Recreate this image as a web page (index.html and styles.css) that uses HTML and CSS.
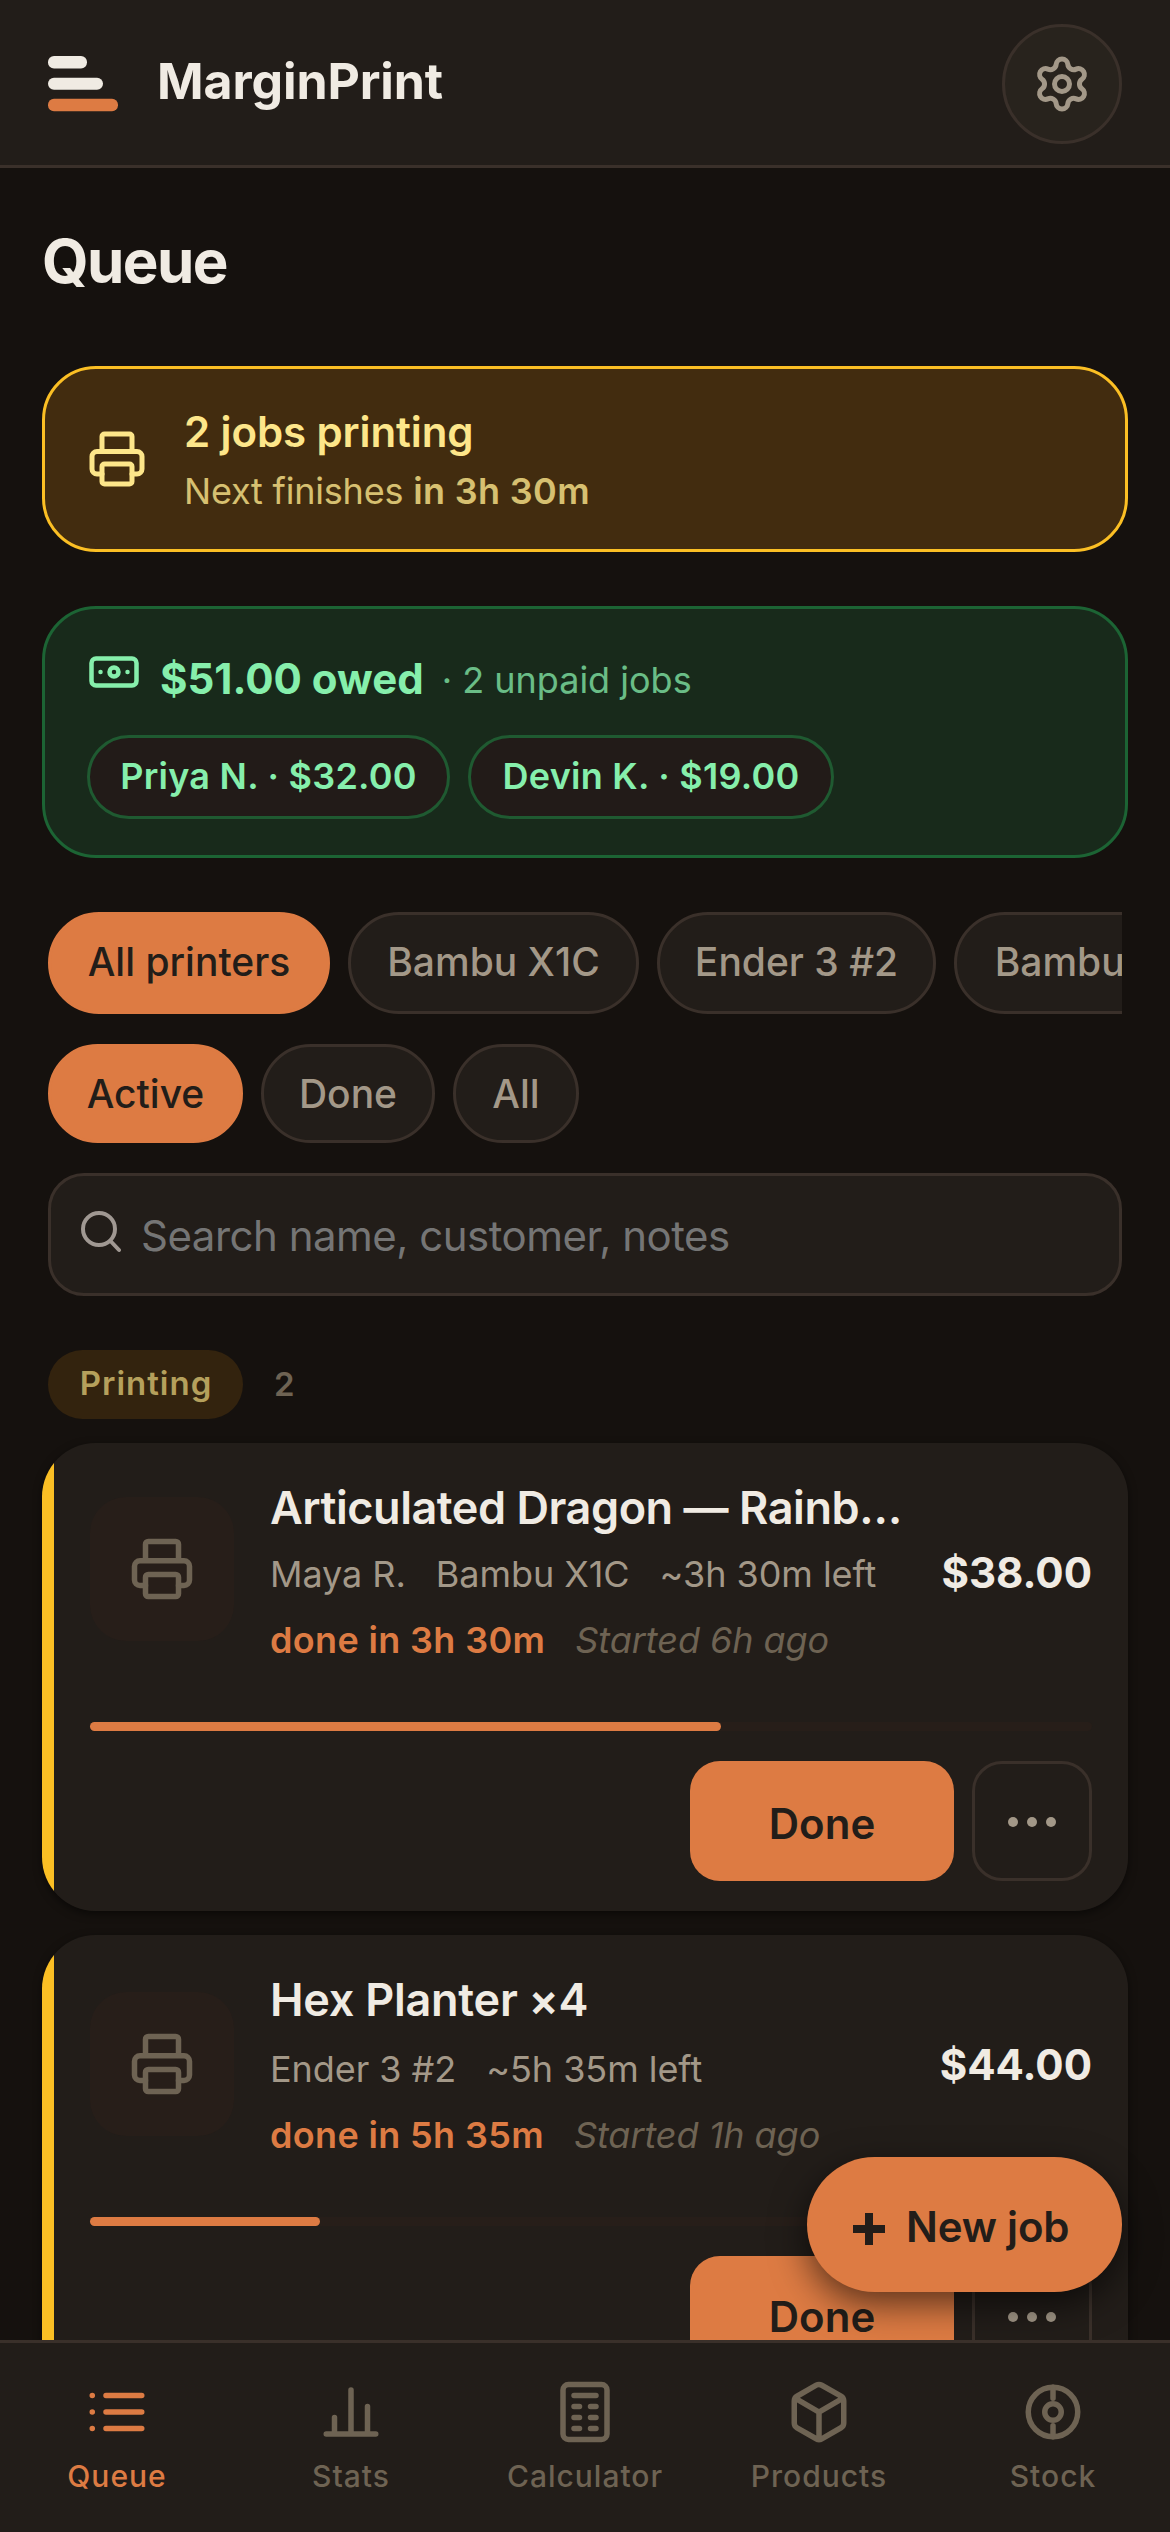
FILE: index.html
```html
<!DOCTYPE html>
<html lang="en">
<head>
<meta charset="utf-8">
<title>MarginPrint</title>
<link rel="stylesheet" href="styles.css">
</head>
<body>
<svg width="0" height="0" class="defs">
  <symbol id="printer" viewBox="0 0 24 24"><path d="M6 9V3a1 1 0 0 1 1-1h10a1 1 0 0 1 1 1v6M6 18H4a2 2 0 0 1-2-2v-5a2 2 0 0 1 2-2h16a2 2 0 0 1 2 2v5a2 2 0 0 1-2 2h-2"/><rect x="6" y="14" width="12" height="8" rx="1"/></symbol>
</svg>
<div class="app">
  <header class="topbar">
    <svg class="logo" viewBox="0 0 70 56"><rect width="39" height="12.500" rx="6" fill="#f0ebe3"/><rect y="21.800" width="55" height="12" rx="6" fill="#f0ebe3"/><rect y="42.800" width="70" height="12.500" rx="6" fill="#dd7b43"/></svg>
    <span class="brand">MarginPrint</span>
    <button class="settings" aria-label="Settings"><svg class="icon" viewBox="0 0 24 24"><path d="M9.671 4.136a2.340 2.340 0 0 1 4.659 0 2.340 2.340 0 0 0 3.319 1.915 2.340 2.340 0 0 1 2.330 4.033 2.340 2.340 0 0 0 0 3.831 2.340 2.340 0 0 1-2.330 4.033 2.340 2.340 0 0 0-3.319 1.915 2.340 2.340 0 0 1-4.659 0 2.340 2.340 0 0 0-3.320-1.915 2.340 2.340 0 0 1-2.330-4.033 2.340 2.340 0 0 0 0-3.831A2.340 2.340 0 0 1 6.350 6.051a2.340 2.340 0 0 0 3.319-1.915"/><circle cx="12" cy="12" r="3"/></svg></button>
  </header>
  <main class="content">
    <h1 class="title">Queue</h1>
    <section class="banner">
      <svg class="icon banner-icon"><use href="#printer"/></svg>
      <div class="banner-text"><div class="banner-title">2 jobs printing</div><div class="banner-sub">Next finishes <b>in 3h 30m</b></div></div>
    </section>
    <section class="owed">
      <div class="owed-head">
        <svg class="icon cash" viewBox="0 0 24 24"><rect x="2" y="6" width="20" height="12" rx="2"/><circle cx="12" cy="12" r="2"/><path d="M6 12h.01M18 12h.01"/></svg>
        <span class="owed-total">$51.00 owed</span><span class="owed-note">· 2 unpaid jobs</span>
      </div>
      <div class="owed-list"><span class="debtor">Priya N. · $32.00</span><span class="debtor debtor-second">Devin K. · $19.00</span></div>
    </section>
    <div class="chips printers"><span class="chip on c1">All printers</span><span class="chip c2">Bambu X1C</span><span class="chip c3">Ender 3 #2</span><span class="chip c4">Bambu A1</span></div>
    <div class="chips states"><span class="chip on c5">Active</span><span class="chip c6">Done</span><span class="chip c7">All</span></div>
    <div class="search"><svg class="glass" viewBox="0 0 40 42"><circle cx="18" cy="18" r="16"/><path d="M29.500 30 38 39"/></svg><span>Search name, customer, notes</span></div>
    <div class="group"><span class="status">Printing</span><span class="count">2</span></div>
    <article class="job">
      <div class="job-head">
        <div class="thumb"><svg class="icon"><use href="#printer"/></svg></div>
        <div class="info">
          <div class="name">Articulated Dragon — Rainb…</div>
          <div class="meta"><span>Maya R.</span><span>Bambu X1C</span><span>~3h 30m left</span></div>
          <div class="meta timing"><span class="eta">done in 3h 30m</span><span class="started">Started 6h ago</span></div>
        </div>
        <div class="price">$38.00</div>
      </div>
      <div class="track"><div class="fill" style="width:63%"></div></div>
      <div class="actions"><button class="done">Done</button><button class="more" aria-label="More"><i></i><i></i><i></i></button></div>
    </article>
    <article class="job second">
      <div class="job-head">
        <div class="thumb"><svg class="icon"><use href="#printer"/></svg></div>
        <div class="info">
          <div class="name">Hex Planter ×4</div>
          <div class="meta"><span>Ender 3 #2</span><span>~5h 35m left</span></div>
          <div class="meta timing"><span class="eta">done in 5h 35m</span><span class="started">Started 1h ago</span></div>
        </div>
        <div class="price">$44.00</div>
      </div>
      <div class="track"><div class="fill" style="width:23%"></div></div>
      <div class="actions"><button class="done">Done</button><button class="more" aria-label="More"><i></i><i></i><i></i></button></div>
    </article>
  </main>
  <button class="fab"><svg class="plus" viewBox="0 0 34 34"><path d="M17 1v32M1 17h32"/></svg><span>New job</span></button>
  <nav class="tabs">
    <a class="tab active"><svg class="icon" viewBox="0 0 24 24"><path d="M8 6h13M8 12h13M8 18h13M3 6h.01M3 12h.01M3 18h.01"/></svg><span>Queue</span></a>
    <a class="tab"><svg class="icon" viewBox="0 0 24 24"><path d="M3 20h18M6 20v-6M12 20V4M18 20V10"/></svg><span>Stats</span></a>
    <a class="tab"><svg class="icon" viewBox="0 0 24 24"><rect x="4" y="2" width="16" height="20" rx="2"/><path d="M8 6h8M8 10h2M14 10h2M8 14h2M14 14h2M8 18h2M14 18h2"/></svg><span>Calculator</span></a>
    <a class="tab"><svg class="icon" viewBox="0 0 24 24"><path d="M21 16V8a2 2 0 0 0-1-1.730l-7-4a2 2 0 0 0-2 0l-7 4A2 2 0 0 0 3 8v8a2 2 0 0 0 1 1.730l7 4a2 2 0 0 0 2 0l7-4A2 2 0 0 0 21 16zM3.270 6.960 12 12.010l8.730-5.050M12 22.080V12"/></svg><span>Products</span></a>
    <a class="tab"><svg class="icon" viewBox="0 0 24 24"><circle cx="12" cy="12" r="9"/><circle cx="12" cy="12" r="3"/><path d="M12 3v4M12 17v4"/></svg><span>Stock</span></a>
  </nav>
</div>
</body>
</html>
```
FILE: styles.css
```css
* { box-sizing: border-box; }
body { margin: 0; background: #15110e; color: #f0ebe3; font-family: Inter, "Liberation Sans", sans-serif; }
button { font: inherit; margin: 0; padding: 0; }
.defs { position: absolute; }
.app { position: relative; display: flex; flex-direction: column; width: 1170px; height: 2532px; overflow: hidden; }
.icon { width: 60px; height: 60px; flex: none; fill: none; stroke: currentColor; stroke-width: 2; stroke-linecap: round; stroke-linejoin: round; }
.topbar { display: flex; flex: none; align-items: center; height: 168px; padding: 3px 48px 0; background: #221d19; border-bottom: 3px solid #3a302a; }
.logo { width: 70px; height: 56px; margin-right: 39px; }
.brand { padding-bottom: 6px; font-size: 50px; font-weight: 700; letter-spacing: -.1px; line-height: 60px; }
.settings { display: flex; align-items: center; justify-content: center; width: 120px; height: 120px; margin-left: auto; border: 3px solid #3a302a; border-radius: 50%; background: #28231d; color: #a39888; }
.content { flex: 1; min-height: 0; overflow: hidden; padding: 0 42px; }
.title { margin: 54px 0 65px; font-size: 60px; line-height: 79px; font-weight: 700; letter-spacing: -1.600px; }
.banner { display: flex; align-items: center; gap: 37px; height: 186px; padding: 0 42px; border: 3px solid #fbbf24; border-radius: 54px; background: #422c0f; color: #fde68a; }
.banner-text { padding-top: 2px; }
.banner-title { font-size: 42px; line-height: 57px; font-weight: 600; letter-spacing: -.1px; }
.banner-sub { margin-top: 4px; font-size: 36px; line-height: 54px; letter-spacing: -.2px; opacity: .8; }
.banner-sub b { font-weight: 600; letter-spacing: .35px; }
.owed { height: 252px; margin-top: 54px; padding: 39px 42px; border: 3px solid #1c6434; border-radius: 54px; background: #182a1b; color: #86efac; }
.owed-head { display: flex; align-items: center; height: 60px; }
.cash { width: 54px; height: 54px; margin: 0 19px 12px 0; }
.owed-total { font-size: 42px; font-weight: 700; }
.owed-note { margin-left: 18px; padding-top: 3px; font-size: 36px; opacity: .75; }
.owed-list { display: flex; gap: 18px; margin-top: 27px; }
.debtor { width: 363px; height: 84px; border: 3px solid #1f5a31; border-radius: 42px; background: #221b18; font-size: 36px; font-weight: 600; line-height: 77px; letter-spacing: .25px; text-align: center; white-space: nowrap; }
.debtor-second { width: 366px; }
.chips { display: flex; gap: 18px; margin: 54px 6px 0; overflow: hidden; }
.chip { display: flex; flex: none; align-items: center; justify-content: center; height: 102px; padding-bottom: 4px; border: 3px solid #3a302a; border-radius: 51px; background: #221d19; color: #a39888; font-size: 39px; font-weight: 500; white-space: nowrap; }
.on { border-color: #dd7b43; background: #dd7b43; color: #221d19; }
.c1 { width: 282px; } .c2 { width: 291px; } .c3 { width: 279px; } .c4 { width: 264px; } .c5 { width: 195px; } .c6 { width: 174px; } .c7 { width: 126px; }
.states { margin-top: 30px; }
.states .chip { height: 99px; padding-bottom: 1px; }
.search { display: flex; align-items: center; height: 123px; margin: 30px 6px 0; padding: 2px 0 0 30px; border: 3px solid #3a302a; border-radius: 36px; background: #221d19; color: #757575; font-size: 42px; letter-spacing: -.5px; }
.glass { width: 40px; height: 42px; margin: 0 20px 8px 0; fill: none; stroke: #a09892; stroke-width: 4; stroke-linecap: round; }
.group { display: flex; align-items: center; height: 69px; margin: 54px 6px 24px; font-size: 33px; font-weight: 600; }
.status { width: 195px; height: 69px; padding-left: 1px; border-radius: 35px; background: #33230e; color: #b5a05c; line-height: 67px; letter-spacing: 1px; text-align: center; }
.count { margin: 0 0 2px 31px; color: #6e6353; }
.job { height: 468px; margin-bottom: 24px; padding: 36px 36px 30px 48px; border-radius: 54px; background: linear-gradient(90deg, #fbbf24 12px, #221d19 12px); box-shadow: 0 3px 9px rgba(0,0,0,.5); }
.second { height: 471px; }
.job-head { display: flex; align-items: center; height: 180px; }
.second .job-head { height: 186px; }
.thumb { display: flex; align-items: center; justify-content: center; width: 144px; height: 144px; margin-right: 36px; border-radius: 36px; background: #271e19; color: #6e6353; }
.thumb .icon { width: 66px; height: 66px; }
.info { flex: 1; align-self: flex-start; }
.name { margin: -1px 0 3px; font-size: 45px; font-weight: 600; line-height: 60px; letter-spacing: -.45px; white-space: nowrap; }
.second .name { margin-bottom: 6px; letter-spacing: -.25px; }
.meta { display: flex; gap: 30px; height: 66px; align-items: center; color: #a39888; font-size: 36px; letter-spacing: -.05px; white-space: nowrap; }
.eta { color: #dd7b43; font-weight: 600; letter-spacing: .35px; }
.started { color: #6e6353; font-style: italic; }
.price { padding-top: 6px; font-size: 42px; font-weight: 700; }
.second .price { padding-top: 0; }
.track { height: 9px; margin-top: 63px; border-radius: 5px; background: #271e19; }
.second .track { margin-top: 60px; }
.fill { height: 9px; border-radius: 5px; background: #dd7b43; }
.actions { display: flex; justify-content: flex-end; gap: 18px; margin-top: 30px; }
.done { width: 264px; height: 120px; padding-top: 4px; border: 0; border-radius: 30px; background: #dd7b43; color: #221d19; font-size: 42px; font-weight: 600; }
.second .done { padding-top: 0; }
.more { display: flex; align-items: center; justify-content: center; gap: 9px; width: 120px; height: 120px; padding-top: 2px; border: 3px solid #3a302a; border-radius: 30px; background: none; }
.more i { width: 10px; height: 10px; border-radius: 50%; background: #a39888; }
.fab { position: absolute; right: 48px; bottom: 240px; display: flex; align-items: center; width: 315px; height: 135px; padding: 4px 0 0 45px; border: 0; border-radius: 68px; background: #dd7b43; color: #221d19; box-shadow: 0 12px 36px rgba(0,0,0,.6); font-size: 42px; font-weight: 600; letter-spacing: -.2px; }
.plus { width: 34px; height: 34px; margin: 5px 20px 0 0; stroke: currentColor; stroke-width: 8; }
.tabs { position: relative; display: flex; flex: none; height: 192px; border-top: 3px solid #3a302a; background: #221d19; }
.tab { display: flex; flex: 1; flex-direction: column; align-items: center; gap: 13px; padding-top: 36px; color: #6e6353; font-size: 30px; font-weight: 500; line-height: 36px; letter-spacing: 1px; }
.tab .icon { width: 66px; height: 66px; }
.active { color: #dd7b43; }
```
